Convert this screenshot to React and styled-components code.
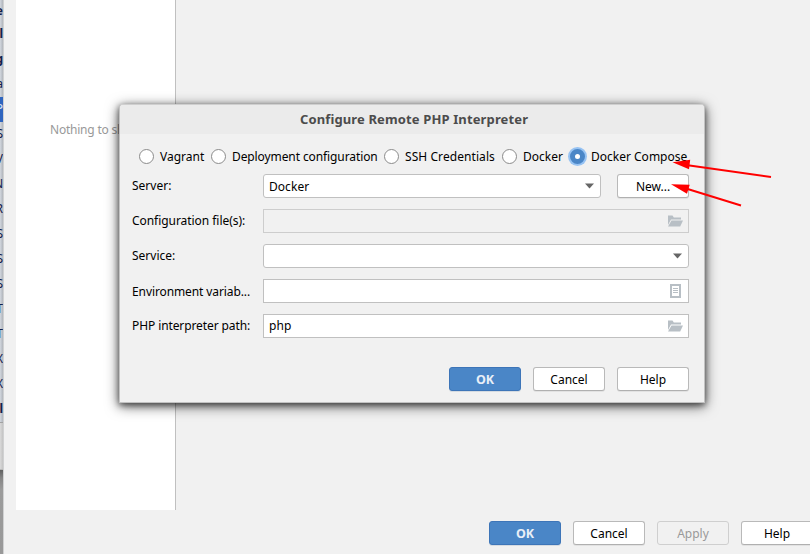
import React from "react";
import styled, { createGlobalStyle, css } from "styled-components";

const GlobalStyle = createGlobalStyle`
  * { box-sizing: border-box; }
  html, body { margin: 0; padding: 0; overflow: hidden; }
  body { font: 12px/18px "Noto Sans", sans-serif; color: #000; background: #f1f1f1; }
`;

const Screen = styled.div`
  position: relative;
  display: flex;
  width: 810px;
  height: 554px;
  overflow: hidden;
  background: #f1f1f1;
`;

/* Sliver of the window that lies behind the settings window */
const BackWindow = styled.div`
  flex: none;
  display: flex;
  flex-direction: column;
  width: 4px;
  overflow: hidden;
  border-right: 1px solid #d0d1d2;
  background: linear-gradient(90deg, #d1d6dd 0, #c8cdd4 1px, #b9bec6 2px, #b4b7bb 3px);
`;

const BackRow = styled.div`
  flex: none;
  display: flex;
  justify-content: flex-end;
  align-items: center;
  height: 25px;
  padding-bottom: 1px;
  overflow: hidden;
  font-weight: ${(p) => (p.$bold ? 700 : 400)};
  color: ${(p) => (p.$selected ? "#dfe8f8" : "#14204a")};
  background: ${(p) => (p.$selected ? "#2f65bf" : "transparent")};
`;

const BackFooter = styled.div`
  flex: none;
  height: 48px;
  border-top: 1px solid #a2a2a2;
  border-bottom: 1px solid #b8b8b8;
  background: linear-gradient(90deg, #dadada, #c3c3c3);
`;

const BackShade = styled.div`
  flex: 1;
  background: linear-gradient(#606060, #858585 8px, #9b9b9b 20px, #999);
`;

const Settings = styled.div`
  flex: 1;
  display: flex;
  flex-direction: column;
  min-width: 0;
  padding-left: 12px;
`;

const ListPane = styled.div`
  display: flex;
  flex: none;
  width: 160px;
  height: 510px;
  padding: 121px 0 0 34px;
  border-right: 1px solid #c0c0c0;
  background: #fff;
  color: #999;
  letter-spacing: -0.22px;
  white-space: nowrap;
  overflow: hidden;
`;

const Footer = styled.div`
  display: flex;
  gap: 12px;
  padding: 11px 0 0 473px;
`;

const Button = styled.button`
  flex: none;
  width: 72px;
  height: 24px;
  padding: 1px 0 0;
  border: 1px solid #b9b9b9;
  border-bottom-color: #b0b0b0;
  border-radius: 3px;
  background: #fff;
  color: #000;
  font: 12px/21px "Noto Sans", sans-serif;
  box-shadow: 0 1px 0 #e2e2e2;
  ${(p) =>
    p.$primary &&
    css`
      padding: 0;
      border-color: #3d75b8;
      background: #4a86c7;
      color: #e8eff7;
      font-size: 12.5px;
      font-weight: 700;
      box-shadow: 0 1px 0 #d5dbe1;
    `}
  &:disabled {
    border-color: #cfcfcf;
    background: #f1f1f1;
    color: #999;
    box-shadow: none;
  }
`;

const Dialog = styled.section`
  position: absolute;
  left: 119px;
  top: 104px;
  width: 586px;
  height: 299px;
  border: 1px solid #c2c2c2;
  border-top-color: #cfcfcf;
  border-radius: 4px 4px 0 0;
  background: #f1f1f1;
  box-shadow: 0 3px 14px rgba(0, 0, 0, 0.6), 0 2px 6px rgba(0, 0, 0, 0.55);
`;

const TitleBar = styled.h1`
  display: flex;
  align-items: center;
  justify-content: center;
  height: 29px;
  margin: 0;
  padding: 0 0 2px 4px;
  border-radius: 3px 3px 0 0;
  background: #ebebeb;
  color: #4c4c4c;
  font-size: 13px;
  font-weight: 700;
  letter-spacing: 0.13px;
`;

const RadioRow = styled.div`
  display: flex;
  height: 40px;
  padding: 15px 0 0 19px;
`;

const Radio = styled.label`
  flex: none;
  display: flex;
  align-items: flex-start;
  gap: 6px;
  width: ${(p) => p.$w}px;
  height: 15px;
  line-height: 15px;
  white-space: nowrap;
  letter-spacing: ${(p) => p.$ls}px;
`;

const Dot = styled.span`
  flex: none;
  width: 15px;
  height: 15px;
  border: 1px solid #8b8b8b;
  border-radius: 50%;
  background: #fff;
  ${(p) =>
    p.$on &&
    css`
      border: 5px solid #4a86c7;
      box-shadow: 0 0 0 2px #97c3f3;
    `}
`;

const Form = styled.div`
  display: grid;
  grid-template-columns: 119px 426px;
  grid-auto-rows: 24px;
  row-gap: 11px;
  column-gap: 12px;
  padding-left: 12px;
`;

const Label = styled.span`
  line-height: ${(p) => (p.$low ? 25 : 23)}px;
  white-space: nowrap;
  letter-spacing: ${(p) => p.$ls || 0}px;
`;

const Pair = styled.div`
  display: flex;
  gap: 16px;
`;

const Field = styled.div`
  flex: 1;
  display: flex;
  align-items: center;
  justify-content: space-between;
  height: 24px;
  padding: 0 5px;
  line-height: 20px;
  border: 1px solid ${(p) => (p.$disabled ? "#cdcdcd" : "#c0c0c0")};
  border-radius: ${(p) => (p.$combo ? 3 : 0)}px;
  background: ${(p) => (p.$disabled ? "#f1f1f1" : "#fff")};
  svg { display: block; flex: none; margin-left: auto; }
`;

const Value = styled.span`
  padding-top: ${(p) => (p.$high ? 0 : 1)}px;
  padding-bottom: ${(p) => (p.$high ? 1 : 0)}px;
  letter-spacing: 0.05px;
`;

const Actions = styled.div`
  display: flex;
  justify-content: flex-end;
  gap: 12px;
  padding: 29px 15px 0 0;
`;

const Arrows = styled.svg`
  position: absolute;
  left: 0;
  top: 0;
  pointer-events: none;
`;

const Caret = () => (
  <svg width="11" height="6" viewBox="0 0 11 6">
    <path d="M1 .5h9L5.5 5.5z" fill="#666" />
  </svg>
);

const Folder = () => (
  <svg width="16" height="14" viewBox="0 0 16 14">
    <path d="M1 1.500h4.500L6.800 3.500H14V5.500H4L1 11z" fill="#b8bfc5" />
    <path d="M4.500 6.500H16l-2.800 6H1z" fill="#b8bfc5" />
  </svg>
);

const Sheet = () => (
  <svg width="16" height="14" viewBox="0 0 16 14">
    <path d="M4 1h9v12H4z" fill="none" stroke="#b8bfc5" strokeWidth="2" />
    <path d="M6 4.500h5M6 6.500h5M6 8.500h5" stroke="#b8bfc5" />
  </svg>
);

const backRows = [
  ["e", true], ["l", true], ["g", true], ["a"], ["P", false, true], ["S"], ["V"], ["N"], ["R"],
  ["S"], ["S"], ["S"], ["T"], ["T"], ["X"], ["X"], ["l", true],
];

const radios = [
  ["Vagrant", 72, 0],
  ["Deployment configuration", 173, -0.1],
  ["SSH Credentials", 118, 0.07],
  ["Docker", 68, 0],
  ["Docker Compose", 120, 0, true],
];

export default function App() {
  return (
    <Screen>
      <GlobalStyle />
      <BackWindow>
        {backRows.map(([t, bold, selected], i) => (
          <BackRow key={i} $bold={bold} $selected={selected} style={i === 0 ? { height: 22 } : undefined}>
            {t}
          </BackRow>
        ))}
        <BackFooter />
        <BackShade />
      </BackWindow>
      <Settings>
        <ListPane>Nothing to show</ListPane>
        <Footer>
          <Button $primary>OK</Button>
          <Button>Cancel</Button>
          <Button disabled>Apply</Button>
          <Button>Help</Button>
        </Footer>
      </Settings>
      <Dialog>
        <TitleBar>Configure Remote PHP Interpreter</TitleBar>
        <RadioRow>
          {radios.map(([t, w, ls, on]) => (
            <Radio key={t} $w={w} $ls={ls}>
              <Dot $on={on} />
              {t}
            </Radio>
          ))}
        </RadioRow>
        <Form>
          <Label>Server:</Label>
          <Pair>
            <Field $combo><Value>Docker</Value><Caret /></Field>
            <Button>New...</Button>
          </Pair>
          <Label $ls={-0.05}>Configuration file(s):</Label>
          <Field $disabled><Folder /></Field>
          <Label>Service:</Label>
          <Field $combo><Caret /></Field>
          <Label $ls={-0.1} $low>Environment variab...</Label>
          <Field><Sheet /></Field>
          <Label $ls={-0.1}>PHP interpreter path:</Label>
          <Field><Value $high>php</Value><Folder /></Field>
        </Form>
        <Actions>
          <Button $primary>OK</Button>
          <Button>Cancel</Button>
          <Button>Help</Button>
        </Actions>
      </Dialog>
      <Arrows width="810" height="554" viewBox="0 0 810 554">
        <g stroke="#f00" strokeWidth="2">
          <path d="M771 177L686 165M741 205.500L686 188.500" />
        </g>
        <path d="M672.500 162.300L690.200 159.800L689 169.300zM671 184.300L689.700 184.800L687 193.800z" fill="#f00" />
      </Arrows>
    </Screen>
  );
}
